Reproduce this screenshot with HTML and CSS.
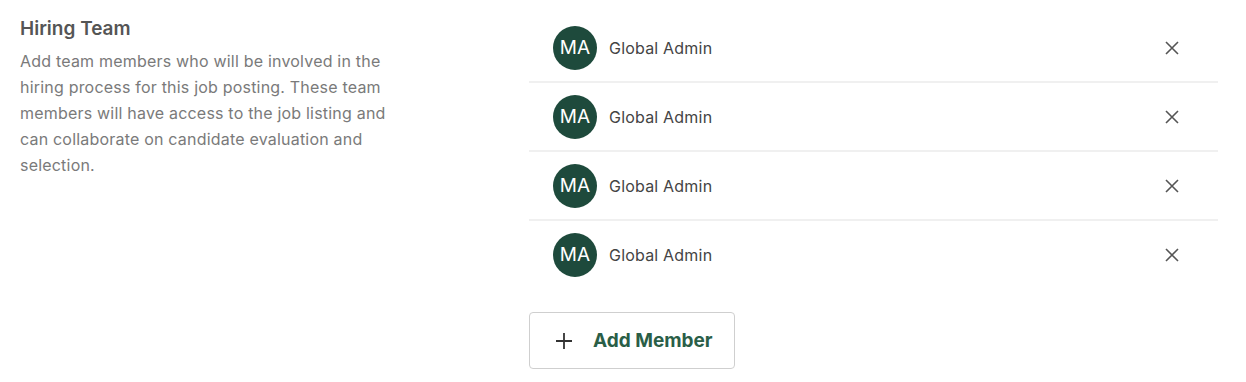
FILE: index.html
```html
<!DOCTYPE html>
<html>
<head>
<meta charset="utf-8">
<link rel="stylesheet" href="styles.css">
</head>
<body>
<div class="section">
  <div class="intro">
    <h2 class="title">Hiring Team</h2>
    <p class="desc">Add team members who will be involved in the hiring process for this job posting. These team members will have access to the job listing and can collaborate on candidate evaluation and selection.</p>
  </div>
  <div class="team">
    <ul class="members">
      <li class="member">
        <span class="avatar">MA</span>
        <span class="name">Global Admin</span>
        <button class="remove" aria-label="Remove"><svg width="16" height="16" viewBox="0 0 16 16"><path d="M2 2L14 14M14 2L2 14" stroke="#555" stroke-width="1.6" fill="none"/></svg></button>
      </li>
      <li class="member">
        <span class="avatar">MA</span>
        <span class="name">Global Admin</span>
        <button class="remove" aria-label="Remove"><svg width="16" height="16" viewBox="0 0 16 16"><path d="M2 2L14 14M14 2L2 14" stroke="#555" stroke-width="1.6" fill="none"/></svg></button>
      </li>
      <li class="member">
        <span class="avatar">MA</span>
        <span class="name">Global Admin</span>
        <button class="remove" aria-label="Remove"><svg width="16" height="16" viewBox="0 0 16 16"><path d="M2 2L14 14M14 2L2 14" stroke="#555" stroke-width="1.6" fill="none"/></svg></button>
      </li>
      <li class="member">
        <span class="avatar">MA</span>
        <span class="name">Global Admin</span>
        <button class="remove" aria-label="Remove"><svg width="16" height="16" viewBox="0 0 16 16"><path d="M2 2L14 14M14 2L2 14" stroke="#555" stroke-width="1.6" fill="none"/></svg></button>
      </li>
    </ul>
    <button class="add"><svg width="18" height="18" viewBox="0 0 18 18"><path d="M9 1V17M1 9H17" stroke="#333" stroke-width="1.8" fill="none"/></svg><span>Add Member</span></button>
  </div>
</div>
</body>
</html>
```
FILE: styles.css
```css
* { box-sizing: border-box; }
body {
  margin: 0;
  background: #fff;
  font-family: "Inter", "Noto Sans", sans-serif;
}
.section {
  display: grid;
  grid-template-columns: 374px 689px;
  column-gap: 135px;
  padding: 14px 0 0 20px;
}
.intro { padding-top: 2px; }
.title {
  margin: 0;
  font-size: 19px;
  font-weight: 600;
  color: #555;
  line-height: 26px;
}
.desc {
  margin: 6px 0 0;
  font-size: 16px;
  letter-spacing: 0.2px;
  line-height: 26px;
  color: #7a7a7a;
}
.members {
  list-style: none;
  margin: 0;
  padding: 0;
}
.member {
  display: flex;
  align-items: center;
  height: 69px;
  padding: 0 24px;
  border-bottom: 2px solid #f0f0f0;
}
.member:last-child { border-bottom-color: transparent; }
.avatar {
  width: 44px;
  height: 44px;
  border-radius: 50%;
  background: #1e4a3c;
  color: #fff;
  display: flex;
  align-items: center;
  justify-content: center;
  font-size: 19px;
  flex: none;
}
.name {
  margin-left: 12px;
  font-size: 16px;
  letter-spacing: 0.2px;
  color: #444;
  flex: 1;
}
.remove {
  border: 0;
  background: none;
  padding: 0;
  display: flex;
  margin-right: 14px;
}
.add {
  margin-top: 22px;
  display: flex;
  align-items: center;
  gap: 20px;
  height: 57px;
  padding: 0 21px 0 25px;
  border: 1px solid #cfcfcf;
  border-radius: 4px;
  background: #fff;
  font-family: inherit;
  font-size: 19px;
  font-weight: 700;
  color: #2a5e47;
}
```
